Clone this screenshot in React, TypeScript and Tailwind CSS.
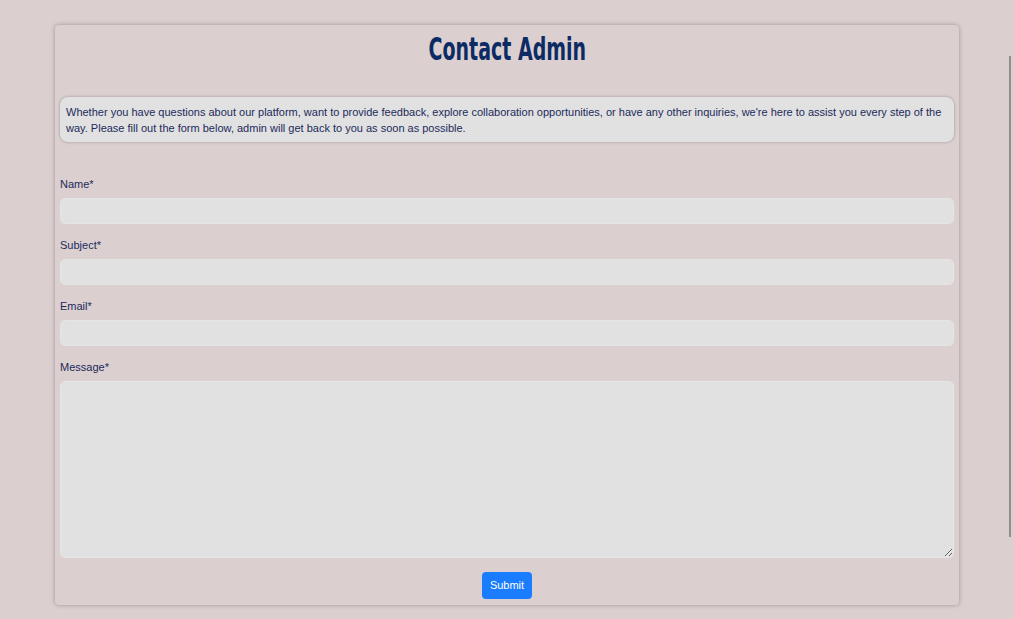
import { useState } from "react";

const labelCls = "block text-[11px] leading-4 text-[#1c2a5c] mb-[6px]";
const fieldCls =
  "block w-full h-[26px] rounded-[5px] border border-[#e6e4e4] bg-[#e1e1e1] px-2 text-[11px] outline-none mb-[13px]";

function ContactAdmin() {
  const [name, setName] = useState("");
  const [subject, setSubject] = useState("");
  const [email, setEmail] = useState("");
  const [message, setMessage] = useState("");

  const handleSubmit = (e: React.FormEvent<HTMLFormElement>) => {
    e.preventDefault();
  };

  return (
    <div className="relative min-h-[619px] bg-[#dbd0cf] pl-[55px] pt-[25px] font-['Liberation_Sans',Arial,sans-serif]">
      <div className="w-[904px] h-[580px] rounded-[4px] bg-[#dbd0cf] shadow-[0_0_4px_rgba(0,0,0,0.3)] px-[5px]">
        <h1 className="pt-[6px] h-[72px] text-center text-[32px] leading-[36px] font-bold text-[#0c2b64] font-['DejaVu_Sans_Condensed','DejaVu_Sans',sans-serif]">
          <span className="inline-block scale-x-[0.66]">Contact Admin</span>
        </h1>

        <p className="rounded-[8px] bg-[#e1e1e1] shadow-[0_0_3px_rgba(0,0,0,0.3)] px-[6px] pt-[7px] pb-[6px] text-[11px] leading-4 text-[#1c2a5c] h-[45px]">
          Whether you have questions about our platform, want to provide feedback, explore collaboration opportunities, or have any other inquiries, we're here to assist you every step of the way. Please fill out the form below, admin will get back to you as soon as possible.
        </p>

        <form onSubmit={handleSubmit} className="pt-[34px]">
          <label className={labelCls}>Name*</label>
          <input type="text" value={name} onChange={(e) => setName(e.target.value)} className={fieldCls} />

          <label className={labelCls}>Subject*</label>
          <input type="text" value={subject} onChange={(e) => setSubject(e.target.value)} className={fieldCls} />

          <label className={labelCls}>Email*</label>
          <input type="email" value={email} onChange={(e) => setEmail(e.target.value)} className={fieldCls} />

          <label className={labelCls}>Message*</label>
          <textarea
            value={message}
            onChange={(e) => setMessage(e.target.value)}
            className="block w-full h-[177px] rounded-[5px] border border-[#e6e4e4] bg-[#e1e1e1] px-2 py-1 text-[11px] outline-none resize-y"
          />

          <div className="flex justify-center pt-[14px]">
            <button
              type="submit"
              className="h-[27px] w-[50px] rounded-[4px] bg-[#1a7cff] text-[11px] text-white"
            >
              Submit
            </button>
          </div>
        </form>
      </div>
      {/* scrollbar thumb of outer panel */}
      <div className="absolute left-[1009px] top-[56px] h-[481px] w-[2px] bg-[#8e8e8e]" />
    </div>
  );
}

export default function App() {
  return <ContactAdmin />;
}
